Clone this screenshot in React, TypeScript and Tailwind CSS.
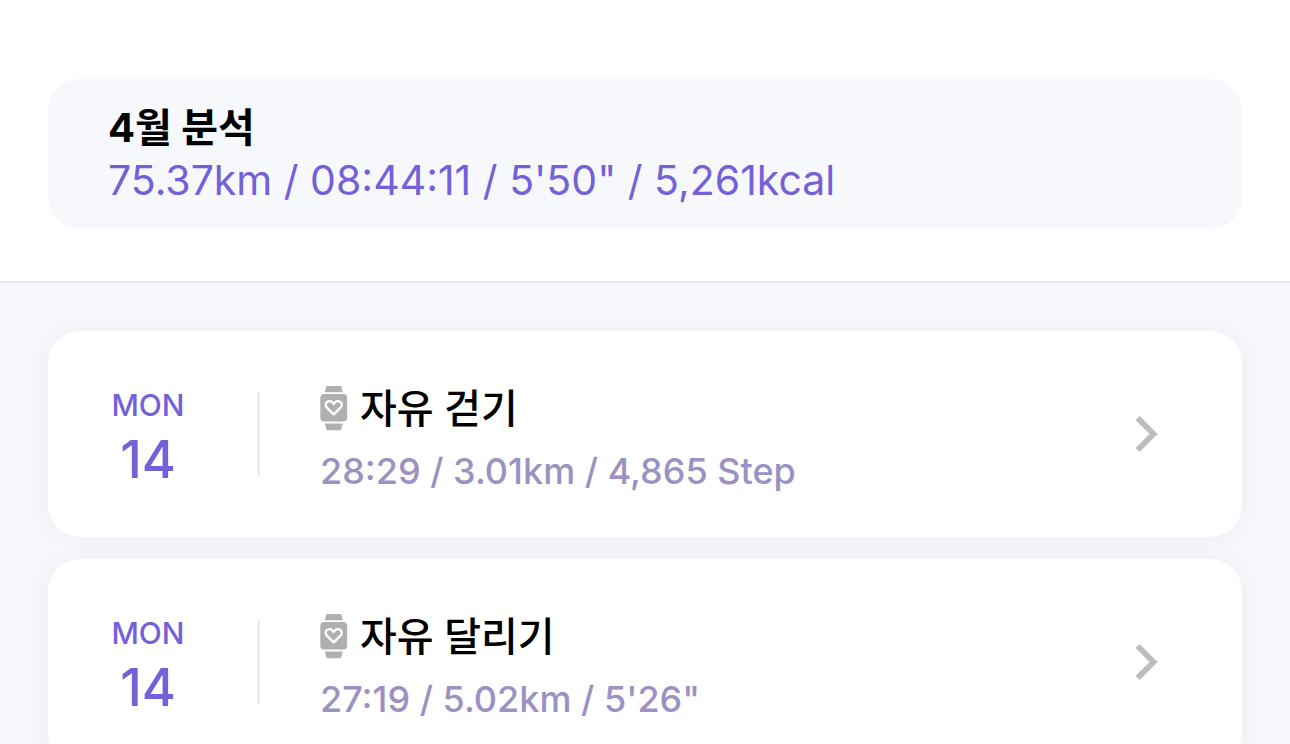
type Activity = { id: number; weekday: string; day: string; title: string; stats: string };

const activities: Activity[] = [
  { id: 1, weekday: 'MON', day: '14', title: '자유 걷기', stats: '28:29 / 3.01km / 4,865 Step' },
  { id: 2, weekday: 'MON', day: '14', title: '자유 달리기', stats: `27:19 / 5.02km / 5'26"` },
];

function WatchIcon() {
  return (
    <svg viewBox="0 1 28 46" className="h-[46px] w-7 shrink-0" fill="#afafaf" aria-hidden="true">
      <path d="M6.4 1.2Q6.7 0.2 7.7 0.2H19.9Q20.9 0.2 21.2 1.2L22.8 7.2H4.8Z" />
      <path d="M4.8 38.4H22.8L21.2 44.2Q20.9 45.2 19.9 45.2H7.7Q6.7 45.2 6.4 44.2Z" />
      <rect x="0.3" y="9" width="26.8" height="27.4" rx="4" />
      <path
        d="M13.7 29.3L7.1 22.8C5.1 20.7 5.2 18.4 6.9 17.1C8.7 15.6 11.2 15.9 12.5 17.5L13.7 18.9L14.9 17.5C16.2 15.9 18.7 15.6 20.5 17.1C22.2 18.4 22.3 20.7 20.3 22.8Z"
        fill="none"
        stroke="#fff"
        strokeWidth="2.4"
        strokeLinejoin="round"
      />
    </svg>
  );
}

function Chevron() {
  return (
    <svg viewBox="0 0 24 38" className="h-[38px] w-6 shrink-0" fill="none" stroke="#bdbdbd" strokeWidth="5.8" aria-hidden="true">
      <path d="M2.6 3L18.6 19L2.6 35" />
    </svg>
  );
}

function ActivityCard({ activity }: { activity: Activity }) {
  return (
    <li>
      <a
        href={`#activity-${activity.id}`}
        className="flex items-center rounded-[32px] bg-white py-9 pr-[83px] pl-[60px] shadow-[0_0_24px_rgba(50,50,90,0.04)]"
      >
        <div className="flex w-20 shrink-0 flex-col items-center text-[#7460d9]">
          <span className="text-[30px] leading-[52px] font-medium">{activity.weekday}</span>
          <span className="text-[52px] leading-[58px] font-medium">{activity.day}</span>
        </div>
        <div className="ml-[69px] h-[84px] w-[3px] shrink-0 bg-[#ededed]" />
        <div className="ml-[60px] min-w-0 flex-1 pt-3">
          <div className="flex items-center gap-3">
            <WatchIcon />
            <h2 className="text-[40px] leading-[60px] font-medium text-black">{activity.title}</h2>
          </div>
          <p className="pt-0.5 text-[36px] leading-[60px] font-medium text-[#9b92c3]">{activity.stats}</p>
        </div>
        <Chevron />
      </a>
    </li>
  );
}

export default function App() {
  return (
    <main className="h-screen overflow-hidden bg-[#f6f7fc] font-['Inter','Noto_Sans_CJK_KR',sans-serif]">
      <header className="border-b-2 border-[#e9e9f3] bg-white px-12 pt-[79px] pb-[52px]">
        <section className="rounded-[32px] bg-[#f7f8fc] px-[60px] py-[23px]">
          <h1 className="text-[40px] leading-[52px] font-bold text-black">4월 분석</h1>
          <p className="text-[41px] leading-[52px] text-[#7460d9]">75.37km / 08:44:11 / 5'50" / 5,261kcal</p>
        </section>
      </header>
      <ul className="flex flex-col gap-[22px] px-12 py-12">
        {activities.map((activity) => (
          <ActivityCard key={activity.id} activity={activity} />
        ))}
      </ul>
    </main>
  );
}
